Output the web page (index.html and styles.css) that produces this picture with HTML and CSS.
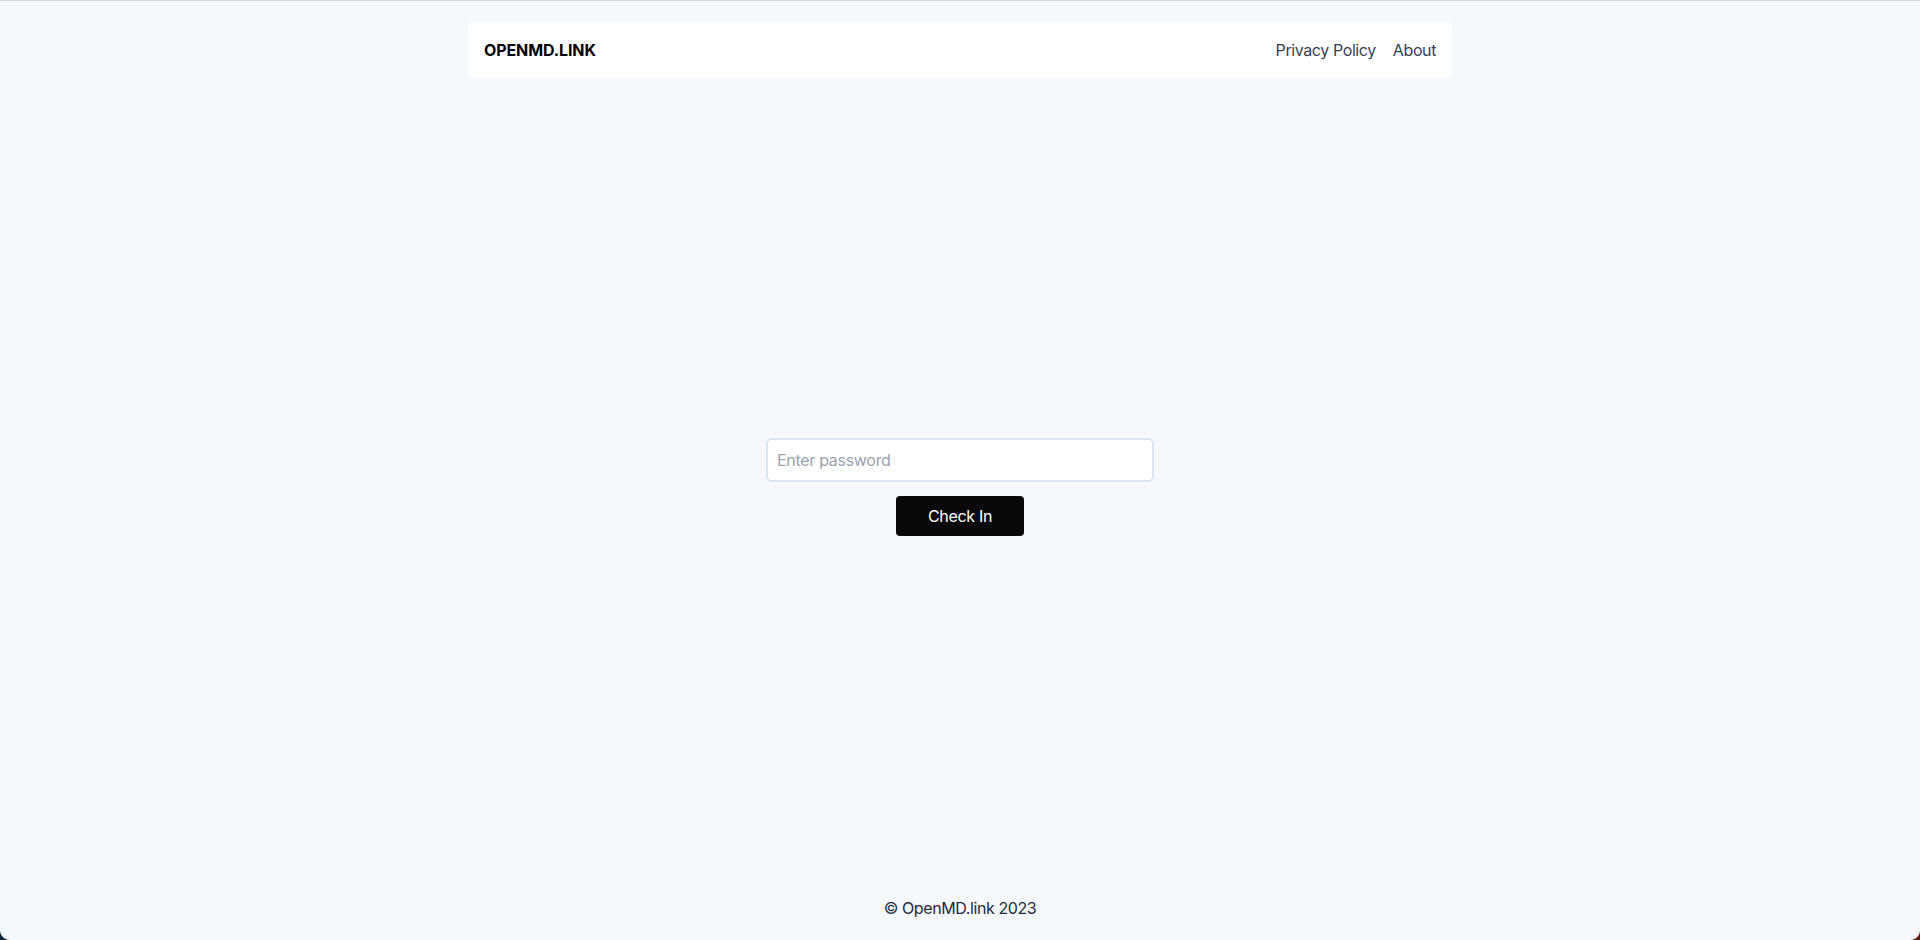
FILE: index.html
```html
<!DOCTYPE html>
<html lang="en">
<head>
    <meta charset="utf-8">
    <meta name="viewport" content="width=device-width, initial-scale=1.0">
    <title>OpenMD.link</title>
    <link rel="stylesheet" href="styles.css">
</head>
<body>
    <header class="topbar">
        <a class="logo" href="#">OPENMD.LINK</a>
        <nav class="links">
            <a href="#">Privacy Policy</a>
            <a href="#">About</a>
        </nav>
    </header>

    <main class="checkin">
        <form class="checkin-form">
            <input type="password" class="password" placeholder="Enter password">
            <button type="button" class="btn">Check In</button>
        </form>
    </main>

    <footer class="footer">© OpenMD.link 2023</footer>

    <div class="corner corner-left"></div>
    <div class="corner corner-right"></div>
</body>
</html>
```

FILE: styles.css
```css
html, body{
    margin: 0;
    height: 100%;
}
body{
    background-color: #f5f9fc;
    border-top: 1px solid #d9d9d9;
    box-sizing: border-box;
    display: flex;
    flex-direction: column;
    font-family: Inter, "Noto Sans", sans-serif;
    font-size: 16px;
    letter-spacing: -0.4px;
    color: #1e293b;
}
a{
    text-decoration: none;
}

.topbar{
    width: 984px;
    height: 56px;
    margin: 21px auto 0;
    padding: 0 16px;
    box-sizing: border-box;
    background-color: white;
    border-radius: 4px;
    display: flex;
    align-items: center;
    justify-content: space-between;
}
.logo{
    color: #000;
    font-weight: 700;
    font-size: 16px;
    letter-spacing: -0.1px;
}
.links{
    display: flex;
    gap: 17px;
}
.links a{
    color: #334155;
}

.checkin{
    flex: 1;
    display: flex;
    align-items: center;
    justify-content: center;
}
.checkin-form{
    display: flex;
    flex-direction: column;
    align-items: center;
    gap: 14px;
}
.password{
    width: 388px;
    height: 44px;
    box-sizing: border-box;
    border: 2px solid #dfe6ef;
    border-radius: 6px;
    padding: 0 9px;
    font-family: inherit;
    font-size: 16px;
    letter-spacing: -0.3px;
    color: #1e293b;
    background: white;
    outline: none;
}
.password::placeholder{
    color: #9ca3af;
}
.btn{
    width: 128px;
    height: 40px;
    border: none;
    border-radius: 4px;
    background-color: #09090b;
    color: white;
    font-family: inherit;
    font-size: 16px;
    letter-spacing: -0.3px;
}

.footer{
    text-align: center;
    line-height: 24px;
    padding-bottom: 20px;
}

.corner{
    position: fixed;
    bottom: 0;
    width: 10px;
    height: 10px;
}
.corner-left{
    left: 0;
    background: radial-gradient(circle at 100% 0, #f5f9fc 9.5px, #0f2a3a 10.5px);
}
.corner-right{
    right: 0;
    background: radial-gradient(circle at 0 0, #f5f9fc 9.5px, #6b1a10 10.5px);
}
```
